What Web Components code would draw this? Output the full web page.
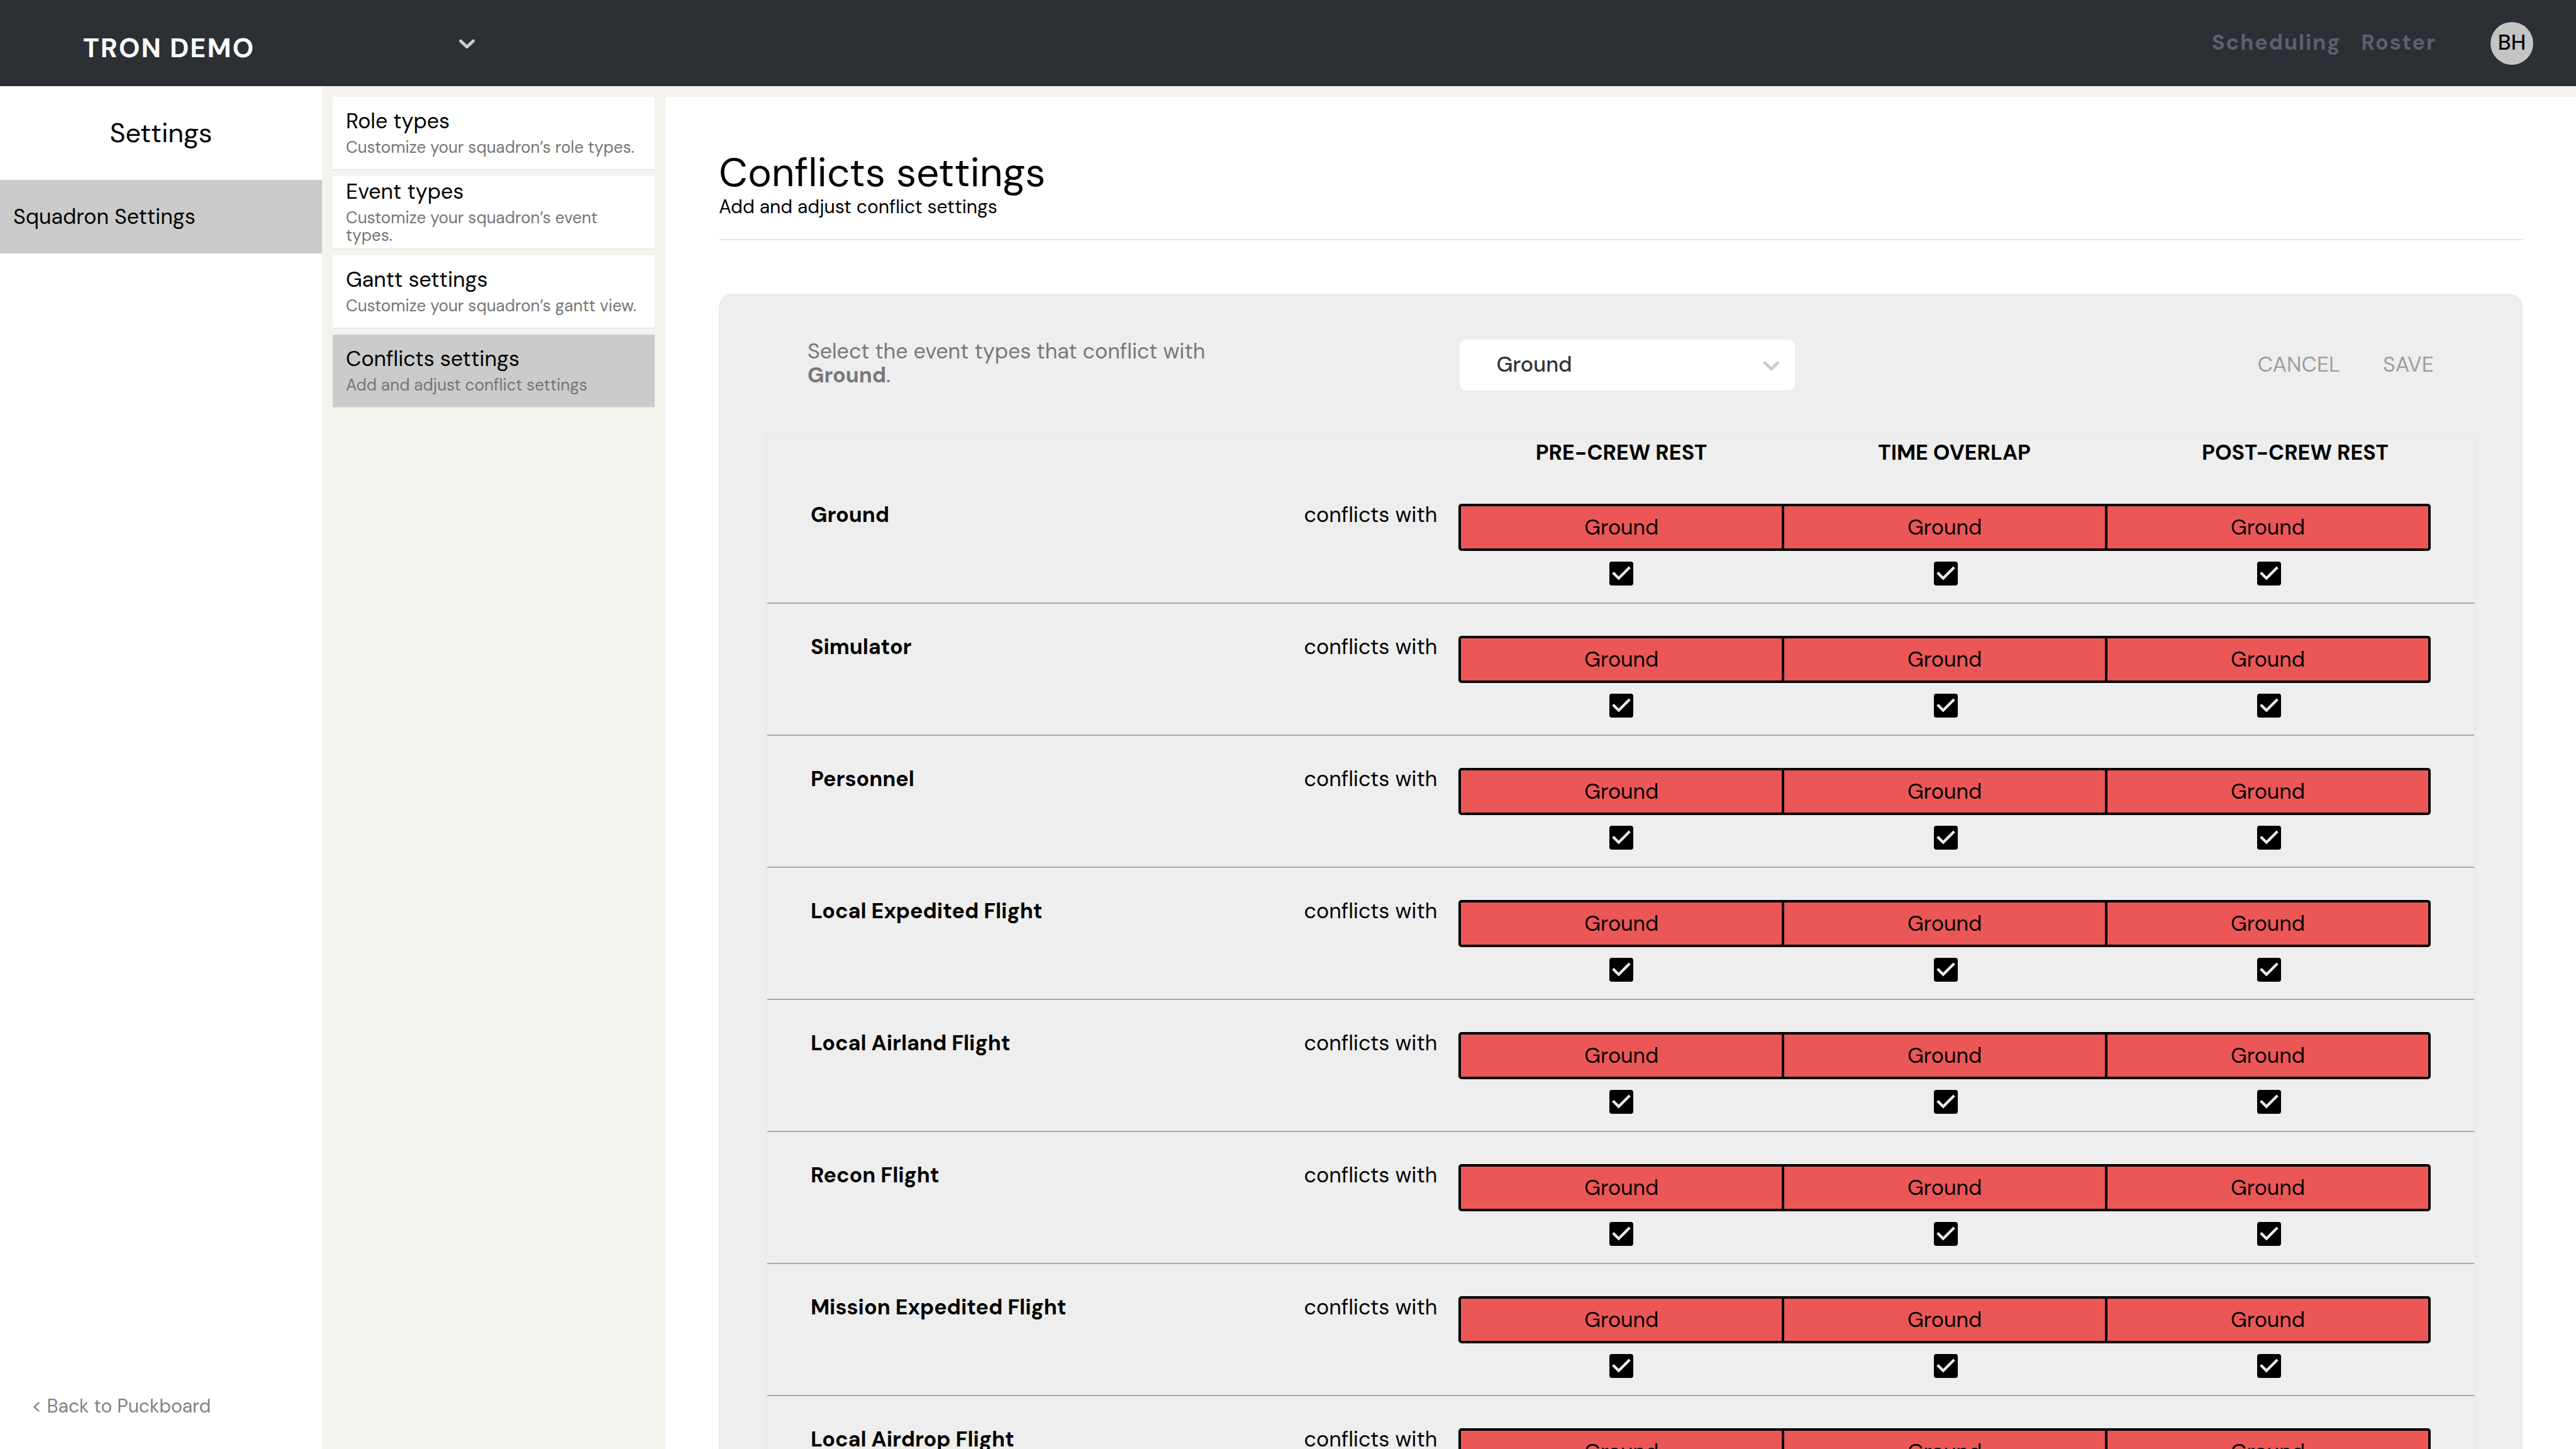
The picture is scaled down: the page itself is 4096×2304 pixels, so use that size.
<!DOCTYPE html>
<html lang="en">
<head>
<meta charset="utf-8">
<title>Conflicts settings</title>
<style>
  html, body { margin: 0; height: 100%; }
  body {
    font-family: "DM Sans", Inter, "Open Sans", sans-serif;
    font-size: 34px;
    line-height: 44px;
    color: #000;
    background: #f5f3ee;
    overflow: hidden;
  }
</style>
</head>
<body>
<puck-app></puck-app>

<template id="puck-app">
  <style>
    :host { display: flex; flex-direction: column; height: 100vh; overflow: hidden; }
    .body { flex: 1; min-height: 0; display: flex; }
    puck-page { flex: 1; min-width: 0; }
  </style>
  <puck-header></puck-header>
  <div class="body">
    <puck-sidebar></puck-sidebar>
    <settings-menu>
      <settings-card heading="Role types">Customize your squadron’s role types.</settings-card>
      <settings-card heading="Event types">Customize your squadron’s event types.</settings-card>
      <settings-card heading="Gantt settings">Customize your squadron’s gantt view.</settings-card>
      <settings-card heading="Conflicts settings" active>Add and adjust conflict settings</settings-card>
    </settings-menu>
    <puck-page>
      <span slot="title">Conflicts settings</span>
      <span slot="subtitle">Add and adjust conflict settings</span>
      <conflict-panel event="Ground"></conflict-panel>
    </puck-page>
  </div>
</template>

<template id="puck-header">
  <style>
    :host { display: flex; align-items: center; justify-content: space-between; height: 137px; flex: none; background: #2c2f33; }
    .squadron { display: grid; align-items: center; width: 780px; height: 100%; }
    .squadron > * { grid-area: 1 / 1; }
    select { appearance: none; border: 0; margin: 0; width: 100%; height: 100%; padding: 14px 80px 0 132px; background: transparent; color: #fff; font: 700 43px/56px "DM Sans", Inter, sans-serif; letter-spacing: 2px; }
    chevron-icon { justify-self: end; margin-right: 16px; color: #ccc; pointer-events: none; }
    nav { display: flex; align-items: center; padding-right: 68px; }
    nav a { color: #5e606e; font-weight: 700; letter-spacing: 2px; text-decoration: none; margin-right: 32px; padding-bottom: 2px; }
    button { width: 68px; height: 68px; margin: 0 0 0 54px; padding: 0 0 2px; border: 0; border-radius: 50%; background: #c4c4c4; color: #000; font: 500 34px/44px "DM Sans", Inter, sans-serif; }
  </style>
  <div class="squadron">
    <select aria-label="Squadron"><option>TRON DEMO</option></select>
    <chevron-icon></chevron-icon>
  </div>
  <nav>
    <a href="#scheduling">Scheduling</a>
    <a href="#roster">Roster</a>
    <button type="button">BH</button>
  </nav>
</template>

<template id="chevron-icon">
  <style>
    :host { display: block; width: 43px; height: 43px; }
    svg { display: block; width: 100%; height: 100%; fill: currentColor; }
  </style>
  <svg viewBox="0 0 20 20" aria-hidden="true"><path d="M4.516 7.548c0.436-0.446 1.043-0.481 1.576 0l3.908 3.747 3.908-3.747c0.533-0.481 1.141-0.446 1.574 0 0.436 0.445 0.408 1.197 0 1.615-0.406 0.418-4.695 4.502-4.695 4.502-0.217 0.223-0.502 0.335-0.787 0.335s-0.57-0.112-0.789-0.335c0 0-4.287-4.084-4.695-4.502s-0.436-1.17 0-1.615z"/></svg>
</template>

<template id="puck-sidebar">
  <style>
    :host { display: flex; flex-direction: column; width: 512px; flex: none; background: #fff; }
    h2 { margin: 0; padding: 46px 0 47px; font-size: 43px; line-height: 56px; font-weight: 400; text-align: center; }
    a { color: inherit; text-decoration: none; }
    .item { padding: 37px 21px 36px; background: #cbcbcb; }
    .back { margin-top: auto; padding: 0 50px 48px; font-size: 30px; line-height: 40px; color: #828282; }
  </style>
  <h2>Settings</h2>
  <a class="item" href="#squadron">Squadron Settings</a>
  <a class="back" href="#puckboard">&lt; Back to Puckboard</a>
</template>

<template id="settings-menu">
  <style>
    :host { display: flex; flex-direction: column; gap: 9px; width: 512px; flex: none; padding: 17px; }
  </style>
  <slot></slot>
</template>

<template id="settings-card">
  <style>
    :host { display: block; }
    a { display: flex; flex-direction: column; justify-content: center; gap: 7px; height: 113px; padding: 0 21px 2px; border-bottom: 2px solid #e8e8e8; background: #fff; color: inherit; text-decoration: none; }
    :host([active]) a { background: #cbcbcb; }
    b { font-weight: 400; line-height: 40px; }
    span { font-size: 26px; line-height: 28px; color: #757575; }
  </style>
  <a href="#settings"><b></b><span><slot></slot></span></a>
</template>

<template id="puck-page">
  <style>
    :host { display: block; margin-top: 17px; padding: 81px 85px 0; background: #fff; overflow: hidden; }
    header { padding-bottom: 37px; border-bottom: 2px solid #e8e8e8; margin-bottom: 85px; }
    h1 { margin: 0; font-size: 64px; line-height: 80px; font-weight: 400; }
    p { margin: 0; font-size: 30px; line-height: 28px; }
  </style>
  <header>
    <h1><slot name="title"></slot></h1>
    <p><slot name="subtitle"></slot></p>
  </header>
  <slot></slot>
</template>

<template id="conflict-panel">
  <style>
    :host { display: block; padding: 69px; border: 4px solid #ebebeb; border-radius: 21px; background: #eee; }
    form { margin: 0; }
    .bar { display: grid; grid-template-columns: 2fr 3fr; align-items: start; padding: 0 68px; margin-bottom: 69px; }
    .hint { max-width: 680px; line-height: 38px; color: #777; }
    .tools { display: flex; align-items: center; justify-content: space-between; padding-left: 3px; }
    .pick { display: grid; align-items: center; width: 533px; height: 81px; }
    .pick > * { grid-area: 1 / 1; }
    select { appearance: none; width: 100%; height: 100%; margin: 0; padding: 0 80px 2px 58px; border: 0; border-radius: 9px; background: #fff; color: #333; font: 500 34px/44px "DM Sans", Inter, sans-serif; }
    chevron-icon { justify-self: end; margin-right: 16px; color: #ccc; pointer-events: none; }
    .actions { display: flex; gap: 68px; }
    button { margin: 0; padding: 0 0 2px; border: 0; background: none; color: #9e9e9e; font: 400 34px/44px "DM Sans", Inter, sans-serif; }
  </style>
  <form>
    <div class="bar">
      <label class="hint" for="event">Select the event types that conflict with <b></b>.</label>
      <div class="tools">
        <div class="pick">
          <select id="event"><option></option></select>
          <chevron-icon></chevron-icon>
        </div>
        <div class="actions">
          <button type="button">CANCEL</button>
          <button type="button">SAVE</button>
        </div>
      </div>
    </div>
    <conflict-table></conflict-table>
  </form>
</template>

<template id="conflict-table">
  <style>
    :host { display: block; border: 4px solid #ebebeb; }
    table, thead, tbody { display: block; }
    thead tr { display: flex; justify-content: space-around; width: 60%; margin-left: auto; padding: 4px 0 8px; }
    thead th { padding: 0; font-weight: 700; }
    tbody tr { display: grid; grid-template-columns: 2fr 3fr; padding: 51px 69px 27px; border-bottom: 2px solid #aaa; }
    tbody th { display: flex; justify-content: space-between; align-items: start; padding: 0 34px 0 0; margin-top: -4px; text-align: left; font-weight: 700; }
    tbody th i { font-style: normal; font-weight: 400; }
    tbody td { display: grid; grid-template-columns: 130fr 129fr 129fr; padding: 0; }
  </style>
  <table>
    <thead><tr><th>PRE-CREW REST</th><th>TIME OVERLAP</th><th>POST-CREW REST</th></tr></thead>
    <tbody></tbody>
  </table>
</template>

<template id="conflict-cell">
  <style>
    :host { display: block; }
    label { display: flex; flex-direction: column; align-items: center; gap: 17px; }
    .segment { box-sizing: border-box; width: 100%; height: 75px; border: 4px solid #000; border-left-width: 0; background: #eb5757; line-height: 67px; text-align: center; }
    :host(:first-child) .segment { border-left-width: 4px; border-radius: 5px 0 0 5px; }
    :host(:last-child) .segment { border-radius: 0 5px 5px 0; }
    .box { display: grid; width: 38px; height: 38px; }
    .box > * { grid-area: 1 / 1; width: 100%; height: 100%; margin: 0; }
    input { appearance: none; border-radius: 4px; background: #000; }
    svg { fill: #eee; pointer-events: none; visibility: hidden; }
    input:checked + svg { visibility: visible; }
  </style>
  <label>
    <span class="segment"><slot></slot></span>
    <span class="box">
      <input type="checkbox" checked>
      <svg viewBox="3 3 18 18" aria-hidden="true"><path d="M10 17l-5-5 1.41-1.41L10 14.17l7.59-7.59L19 8l-9 9z"/></svg>
    </span>
  </label>
</template>

<script>
  class PuckElement extends HTMLElement {
    constructor() {
      super();
      const template = document.getElementById(this.localName);
      this.attachShadow({ mode: "open" }).append(template.content.cloneNode(true));
    }
  }

  class SettingsCard extends PuckElement {
    connectedCallback() {
      this.shadowRoot.querySelector("b").textContent = this.getAttribute("heading");
    }
  }

  class ConflictPanel extends PuckElement {
    connectedCallback() {
      const event = this.getAttribute("event");
      this.shadowRoot.querySelector(".hint b").textContent = event;
      this.shadowRoot.querySelector("option").textContent = event;
    }
  }

  const EVENT_TYPES = ["Ground", "Simulator", "Personnel", "Local Expedited Flight", "Local Airland Flight",
    "Recon Flight", "Mission Expedited Flight", "Local Airdrop Flight"];

  class ConflictTable extends PuckElement {
    connectedCallback() {
      const cell = "<conflict-cell>Ground</conflict-cell>";
      this.shadowRoot.querySelector("tbody").innerHTML = EVENT_TYPES.map(name =>
        `<tr><th scope="row"><span>${name}</span><i>conflicts with</i></th><td>${cell.repeat(3)}</td></tr>`).join("");
    }
  }

  const define = (name, base = PuckElement) => customElements.define(name, class extends base {});
  define("chevron-icon");
  define("conflict-cell");
  define("conflict-table", ConflictTable);
  define("conflict-panel", ConflictPanel);
  define("settings-card", SettingsCard);
  define("settings-menu");
  define("puck-sidebar");
  define("puck-header");
  define("puck-page");
  define("puck-app");
</script>
</body>
</html>
